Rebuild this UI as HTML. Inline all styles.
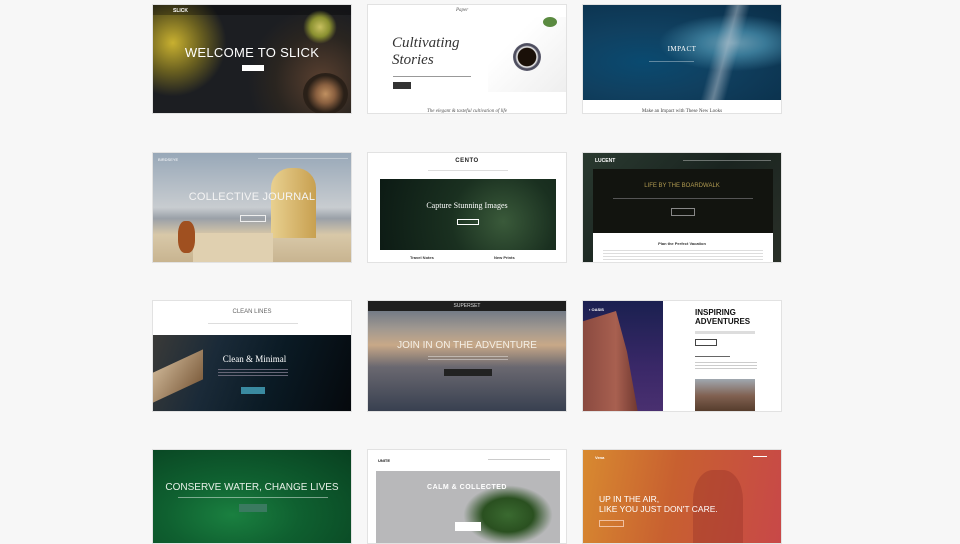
<!DOCTYPE html><html><head><meta charset="utf-8"><style>
*{margin:0;padding:0;box-sizing:border-box}
body{width:960px;height:540px;background:#f7f7f7;position:relative;overflow:hidden;font-family:"Liberation Sans",sans-serif}
.c{position:absolute;width:200px;overflow:hidden;border:1px solid #e2e2e2;background:#fff}
.a{position:absolute}
.t{position:absolute;left:0;right:0;text-align:center;color:#fff}
.btn{position:absolute;border:1px solid #fff;font-size:3px;color:#fff;text-align:center}
.nav{position:absolute;height:1px;background:rgba(255,255,255,.35)}
</style></head><body>

<!-- Row 1 -->
<div class="c" style="left:152px;top:4px;height:110px;background:radial-gradient(circle at 85% 70%,#5a4030 0,#2a2520 25%,transparent 40%),radial-gradient(circle at 10% 35%,#c8b030 0,#6a6020 15%,transparent 28%),#1c1e22">
 <div class="a" style="left:0;top:0;right:0;height:10px;background:rgba(0,0,0,.3)"></div>
 <div class="a" style="left:20px;top:3px;font-size:5px;color:#fff;font-weight:bold">SLICK</div>
 <div class="a" style="left:150px;top:5px;width:34px;height:34px;border-radius:50%;background:radial-gradient(circle,#c8c060 0,#8a9030 40%,transparent 70%)"></div>
 <div class="t" style="top:40px;font-size:13px;letter-spacing:.3px">WELCOME TO SLICK</div>
 <div class="a" style="left:89px;top:60px;width:22px;height:6px;background:#fff"></div>
 <div class="a" style="left:150px;top:68px;width:45px;height:42px;border-radius:50%;background:radial-gradient(circle at 50% 50%,#c09060 0,#8a6040 30%,#2a2018 60%)"></div>
</div>

<div class="c" style="left:367px;top:4px;height:110px">
 <div class="a" style="left:88px;top:3px;font-size:5px;color:#555;font-family:'Liberation Serif',serif;font-style:italic">Paper</div>
 <div class="a" style="left:120px;top:12px;width:80px;height:75px;background:linear-gradient(135deg,#fff 30%,#eee 100%)"></div>
 <div class="a" style="left:145px;top:38px;width:28px;height:28px;border-radius:50%;background:radial-gradient(circle,#1a1008 0,#1a1008 45%,#fff 50%,#445 60%,#aab 100%)"></div>
 <div class="a" style="left:175px;top:12px;width:14px;height:10px;background:#5a8a40;border-radius:50%"></div>
 <div class="a" style="left:24px;top:30px;font-size:15px;color:#333;font-family:'Liberation Serif',serif;font-style:italic;line-height:17px">Cultivating<br>Stories</div>
 <div class="a" style="left:25px;top:71px;width:78px;height:1px;background:#999"></div>
 <div class="a" style="left:25px;top:77px;width:18px;height:7px;background:#333"></div>
 <div class="t" style="top:104px;font-size:5px;color:#555;font-family:'Liberation Serif',serif;font-style:italic">The elegant &amp; tasteful cultivation of life</div>
</div>

<div class="c" style="left:582px;top:4px;height:110px">
 <div class="a" style="left:0;top:0;width:200px;height:95px;background:radial-gradient(ellipse at 75% 40%,#6a9ab0 0,#3a7a98 15%,transparent 35%),radial-gradient(ellipse at 30% 60%,#0a4a70 0,#104060 40%,#0a2e48 100%)"></div>
 <div class="a" style="left:130px;top:0;width:25px;height:95px;background:linear-gradient(90deg,transparent,rgba(190,200,210,.5),transparent);transform:skewX(-15deg)"></div>
 <div class="t" style="top:40px;font-size:7px;font-family:'Liberation Serif',serif;letter-spacing:.5px">IMPACT</div>
 <div class="nav" style="left:66px;top:56px;width:45px"></div>
 <div class="t" style="top:104px;font-size:5px;color:#444;font-family:'Liberation Serif',serif">Make an Impact with These New Looks</div>
</div>

<!-- Row 2 -->
<div class="c" style="left:152px;top:152px;height:111px;background:linear-gradient(180deg,#98a8b8 0,#c8ccd0 50%,#9aa0a8 60%,#d8c8a8 75%,#c8b490 100%)">
 <div class="a" style="left:118px;top:15px;width:45px;height:70px;background:linear-gradient(90deg,#e8d090,#c8a050);border-radius:20px 20px 0 0"></div>
 <div class="a" style="left:40px;top:80px;width:80px;height:31px;background:#e0d0b0"></div>
 <div class="a" style="left:25px;top:68px;width:17px;height:32px;background:#a05020;border-radius:40%"></div>
 <div class="a" style="left:5px;top:4px;font-size:4px;color:#fff">BIRDSEYE</div>
 <div class="nav" style="left:105px;top:5px;width:90px"></div>
 <div class="t" style="top:38px;font-size:11px;color:#f4f4f4;letter-spacing:.2px">COLLECTIVE JOURNAL</div>
 <div class="btn" style="left:87px;top:62px;width:26px;height:7px;border-color:#eee"></div>
</div>

<div class="c" style="left:367px;top:152px;height:111px">
 <div class="t" style="top:5px;font-size:6px;color:#222;font-weight:bold;letter-spacing:.5px">CENTO</div>
 <div class="a" style="left:60px;top:17px;width:80px;height:1px;background:#ddd"></div>
 <div class="a" style="left:12px;top:26px;width:176px;height:71px;background:radial-gradient(circle at 70% 60%,#3a5a3a 0,#1a3020 40%,#0c1a14 100%)"></div>
 <div class="t" style="top:48px;font-size:8px;font-family:'Liberation Serif',serif">Capture Stunning Images</div>
 <div class="btn" style="left:89px;top:66px;width:22px;height:6px"></div>
 <div class="a" style="left:42px;top:102px;font-size:4px;color:#333;font-weight:bold">Travel Notes</div>
 <div class="a" style="left:126px;top:102px;font-size:4px;color:#333;font-weight:bold">New Prints</div>
</div>

<div class="c" style="left:582px;top:152px;height:111px;background:linear-gradient(135deg,#2a3a30,#1a2420 50%,#2a3028)">
 <div class="a" style="left:12px;top:5px;font-size:5px;color:#fff;font-weight:bold">LUCENT</div>
 <div class="nav" style="left:100px;top:7px;width:88px"></div>
 <div class="a" style="left:10px;top:16px;width:180px;height:64px;background:#12140f"></div>
 <div class="t" style="top:30px;font-size:6px;color:#b09a50">LIFE BY THE BOARDWALK</div>
 <div class="a" style="left:30px;top:45px;width:140px;height:1px;background:#555"></div>
 <div class="btn" style="left:88px;top:55px;width:24px;height:8px;border-color:#888"></div>
 <div class="a" style="left:10px;top:80px;width:180px;height:31px;background:#fff"></div>
 <div class="t" style="top:88px;font-size:4px;color:#333;font-weight:bold">Plan the Perfect Vacation</div>
 <div class="a" style="left:20px;top:97px;width:160px;height:10px;background:repeating-linear-gradient(180deg,#ddd 0 1px,transparent 1px 3px)"></div>
</div>

<!-- Row 3 -->
<div class="c" style="left:152px;top:300px;height:112px">
 <div class="t" style="top:8px;font-size:6px;color:#666">CLEAN LINES</div>
 <div class="a" style="left:55px;top:22px;width:90px;height:1px;background:#ddd"></div>
 <div class="a" style="left:0;top:34px;width:200px;height:78px;background:linear-gradient(110deg,#3a3a38 0,#1a2a38 30%,#0a1a24 60%,#05080c 100%)"></div>
 <div class="a" style="left:0;top:60px;width:50px;height:30px;background:linear-gradient(135deg,#c8b090,#806040);transform:skewY(-25deg)"></div>
 <div class="t" style="top:53px;font-size:9px;font-family:'Liberation Serif',serif;padding-left:5px">Clean &amp; Minimal</div>
 <div class="a" style="left:65px;top:68px;width:70px;height:7px;background:repeating-linear-gradient(180deg,#667 0 1px,transparent 1px 3px)"></div>
 <div class="a" style="left:88px;top:86px;width:24px;height:7px;background:#3a8aa0"></div>
</div>

<div class="c" style="left:367px;top:300px;height:112px;background:linear-gradient(180deg,#5a6a80 0,#a09890 25%,#c8a888 40%,#6a6870 60%,#384050 100%)">
 <div class="a" style="left:0;top:0;right:0;height:10px;background:#1e1e1e"></div>
 <div class="t" style="top:2px;font-size:5px;color:#ddd">SUPERSET</div>
 <div class="t" style="top:39px;font-size:10px;color:#f4f0e8">JOIN IN ON THE ADVENTURE</div>
 <div class="a" style="left:60px;top:55px;width:80px;height:6px;background:repeating-linear-gradient(180deg,rgba(255,255,255,.4) 0 1px,transparent 1px 3px)"></div>
 <div class="a" style="left:76px;top:68px;width:48px;height:7px;background:#222"></div>
</div>

<div class="c" style="left:582px;top:300px;height:112px">
 <div class="a" style="left:0;top:0;width:80px;height:112px;background:linear-gradient(180deg,#1a2050 0,#3a2868 60%,#4a3070 100%)"></div>
 <div class="a" style="left:0;top:10px;width:55px;height:102px;background:linear-gradient(90deg,#8a4a40,#a86050 60%,#703830);clip-path:polygon(0 10%,60% 0,80% 40%,100% 100%,0 100%)"></div>
 <div class="a" style="left:6px;top:6px;font-size:4px;color:#fff;font-weight:bold">▪ OASIS</div>
 <div class="a" style="left:112px;top:7px;font-size:8px;color:#111;font-weight:bold;line-height:9px">INSPIRING<br>ADVENTURES</div>
 <div class="a" style="left:112px;top:30px;width:60px;height:3px;background:#ddd"></div>
 <div class="a" style="left:112px;top:38px;width:22px;height:7px;border:1px solid #444"></div>
 <div class="a" style="left:112px;top:55px;width:35px;height:1px;background:#666"></div>
 <div class="a" style="left:112px;top:61px;width:62px;height:9px;background:repeating-linear-gradient(180deg,#ccc 0 1px,transparent 1px 3px)"></div>
 <div class="a" style="left:112px;top:78px;width:60px;height:34px;background:linear-gradient(180deg,#a0a8b0,#806050 50%,#503828)"></div>
</div>

<!-- Row 4 -->
<div class="c" style="left:152px;top:449px;height:95px;background:radial-gradient(ellipse at 40% 70%,#1a8040 0,#0f6030 40%,#084020 100%)">
 <div class="t" style="top:32px;font-size:10px;color:#e8f0e8">CONSERVE WATER, CHANGE LIVES</div>
 <div class="a" style="left:25px;top:47px;width:150px;height:1px;background:rgba(255,255,255,.45)"></div>
 <div class="a" style="left:86px;top:54px;width:28px;height:8px;background:#3a7a60"></div>
</div>

<div class="c" style="left:367px;top:449px;height:95px">
 <div class="a" style="left:10px;top:8px;font-size:4px;color:#111;font-weight:bold">UNITE</div>
 <div class="a" style="left:120px;top:9px;width:62px;height:1px;background:#ccc"></div>
 <div class="a" style="left:8px;top:21px;width:184px;height:74px;background:#b8b8ba"></div>
 <div class="a" style="left:95px;top:35px;width:90px;height:60px;background:radial-gradient(ellipse,#3a6a30 0,#2a5020 40%,transparent 70%)"></div>
 <div class="t" style="top:34px;font-size:7px;letter-spacing:.5px;font-weight:bold">CALM &amp; COLLECTED</div>
 <div class="a" style="left:87px;top:72px;width:26px;height:9px;background:#fff"></div>
</div>

<div class="c" style="left:582px;top:449px;height:95px;background:linear-gradient(100deg,#d88a30 0,#c86030 45%,#c84848 100%)">
 <div class="a" style="left:12px;top:5px;font-size:4px;color:#fff;font-weight:bold">Vena</div>
 <div class="a" style="left:170px;top:6px;width:14px;height:1px;background:#fff"></div>
 <div class="a" style="left:110px;top:20px;width:50px;height:75px;background:rgba(150,50,40,.4);border-radius:40% 40% 0 0"></div>
 <div class="a" style="left:16px;top:44px;font-size:8.5px;color:#fff;line-height:10px">UP IN THE AIR,<br>LIKE YOU JUST DON'T CARE.</div>
 <div class="btn" style="left:16px;top:70px;width:25px;height:7px;border-color:#f0c0a0"></div>
</div>
</body></html>
